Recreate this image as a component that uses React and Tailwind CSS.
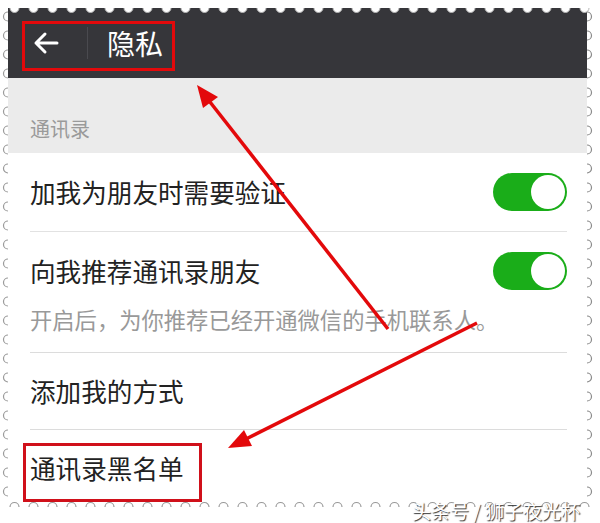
import React from 'react';

const Toggle = () => (
  <div className="flex h-[38px] w-[74px] shrink-0 items-center justify-end rounded-full bg-[#1aad19] pr-[2px]">
    <div className="h-[34px] w-[34px] rounded-full bg-white" />
  </div>
);

// stamp-like torn edge round the screenshot
const Scallops = () => {
  let top = '';
  for (let x = 10; x < 582; x += 19) top += `M${x} 8 a4.5 4.5 0 0 0 9 0 `;
  let bottom = '';
  for (let x = 10; x < 582; x += 19) bottom += `M${x} 507 a4.5 4.5 0 0 1 9 0 `;
  let left = '';
  for (let y = 12; y < 500; y += 19) left += `M8 ${y} a4.5 4.5 0 0 0 0 9 `;
  let right = '';
  for (let y = 12; y < 500; y += 19) right += `M587 ${y} a4.5 4.5 0 0 1 0 9 `;
  return (
    <svg className="pointer-events-none absolute left-0 top-0" width="600" height="523">
      <path d={top} fill="#fff" stroke="#b5b5b5" strokeWidth="1" />
      <path d={bottom} fill="#fff" stroke="#9a9a9a" strokeWidth="1.2" />
      <path d={left} fill="#fff" stroke="#9a9a9a" strokeWidth="1.2" />
      <path d={right} fill="#fff" stroke="#8a8a8a" strokeWidth="1.2" />
    </svg>
  );
};

const Arrows = () => (
  <svg className="pointer-events-none absolute left-0 top-0" width="600" height="523">
    <line x1="388" y1="329" x2="210" y2="102" stroke="#e3090b" strokeWidth="3.5" />
    <polygon points="197,85 218,97 203,108" fill="#e3090b" />
    <line x1="477" y1="323" x2="246" y2="439" stroke="#e3090b" strokeWidth="3.5" />
    <polygon points="228,448 252,446 244,430" fill="#e3090b" />
  </svg>
);

export default function App() {
  return (
    <div className="relative h-[523px] w-[600px] overflow-hidden bg-white font-['Noto_Sans_CJK_SC','Noto_Sans',sans-serif]">
      <div className="ml-[8px] mt-[8px] flex h-[499px] w-[579px] flex-col bg-white">
        <div className="flex h-[70px] items-center bg-[#36363a] pl-[25px]">
          <svg width="26" height="24" viewBox="0 0 26 24" fill="none" stroke="#fff" strokeWidth="3" strokeLinecap="round" strokeLinejoin="round">
            <path d="M24 12H3M12 3L3 12l9 9" />
          </svg>
          <div className="ml-[28px] h-[32px] w-px bg-[#4a4a4f]" />
          <span className="ml-[19px] text-[28px] leading-[34px] text-white">隐私</span>
        </div>

        <div className="h-[75px] bg-[#ebebeb] px-[22px] pt-[40px]">
          <p className="text-[20px] leading-[22px] text-[#9a9a9a]">通讯录</p>
        </div>

        <div className="mx-[22px] mr-[20px] flex h-[79px] items-center justify-between border-b border-[#e2e2e2]">
          <span className="text-[25.6px] leading-[30px] text-[#222]">加我为朋友时需要验证</span>
          <Toggle />
        </div>

        <div className="mx-[22px] mr-[20px] h-[121px] border-b border-[#dcdcdc] pt-[20px]">
          <div className="flex h-[38px] items-center justify-between">
            <span className="text-[25.6px] leading-[30px] text-[#222]">向我推荐通讯录朋友</span>
            <Toggle />
          </div>
          <p className="mt-[16px] text-[22.3px] leading-[26px] text-[#999]">开启后，为你推荐已经开通微信的手机联系人。</p>
        </div>

        <div className="mx-[22px] mr-[20px] flex h-[77px] items-center border-b border-[#dcdcdc]">
          <span className="text-[25.6px] leading-[30px] text-[#222]">添加我的方式</span>
        </div>

        <div className="mx-[22px] flex h-[76px] items-center">
          <span className="text-[25.6px] leading-[30px] text-[#222]">通讯录黑名单</span>
        </div>
      </div>

      <Scallops />

      <div className="absolute left-[22px] top-[21px] h-[50px] w-[153px] border-[3px] border-[#e3090b]" />
      <div className="absolute left-[23px] top-[443px] h-[59px] w-[179px] border-[3px] border-[#d0101a]" />

      <Arrows />

      <span className="absolute left-[412px] top-[500px] text-[19px] leading-[22px] text-white [text-shadow:1px_1px_1px_#333]">
        头条号 / 狮子夜光杯
      </span>
    </div>
  );
}
